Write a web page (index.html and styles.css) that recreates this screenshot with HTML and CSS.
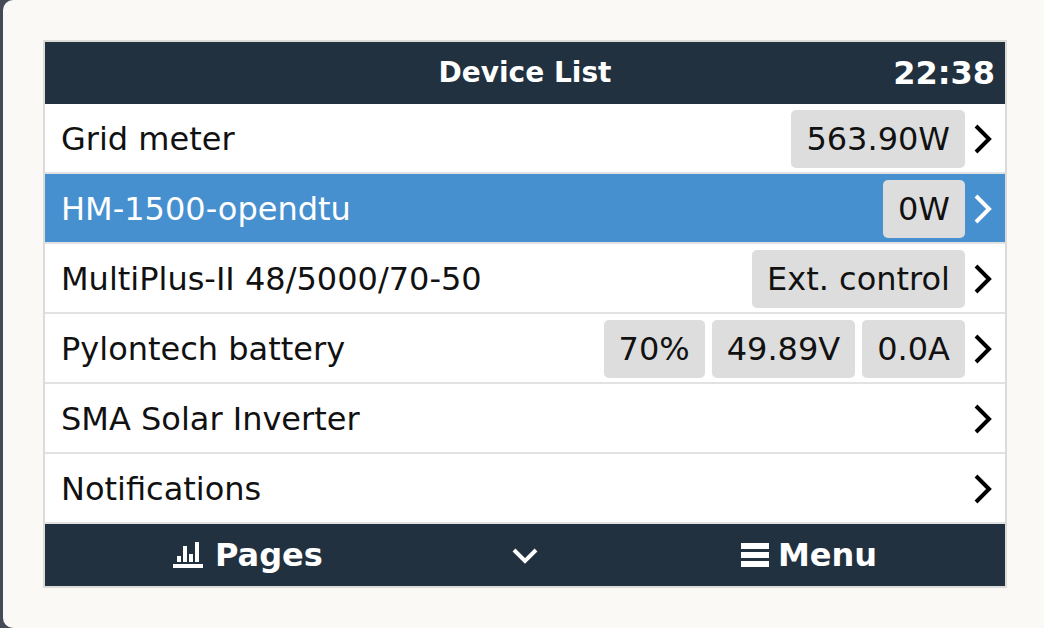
FILE: index.html
```html
<!DOCTYPE html>
<html lang="en">
<head>
<meta charset="utf-8">
<meta name="viewport" content="width=device-width, initial-scale=1">
<title>Device List</title>
<link rel="stylesheet" href="styles.css">
</head>
<body>
<main class="panel">
  <section class="screen">
    <header class="bar">
      <h1 class="title">Device List</h1>
      <time class="clock">22:38</time>
    </header>
    <ul class="list">
      <li><a class="row" href="#grid"><span class="name">Grid meter</span><span class="badge">563.90W</span><svg class="arrow" viewBox="0 0 18 30"><path d="M2 2 15 15 2 28"/></svg></a></li>
      <li><a class="row selected" href="#hm"><span class="name">HM-1500-opendtu</span><span class="badge">0W</span><svg class="arrow" viewBox="0 0 18 30"><path d="M2 2 15 15 2 28"/></svg></a></li>
      <li><a class="row" href="#multiplus"><span class="name">MultiPlus-II 48/5000/70-50</span><span class="badge">Ext. control</span><svg class="arrow" viewBox="0 0 18 30"><path d="M2 2 15 15 2 28"/></svg></a></li>
      <li><a class="row" href="#battery"><span class="name">Pylontech battery</span><span class="badge">70%</span><span class="badge">49.89V</span><span class="badge">0.0A</span><svg class="arrow" viewBox="0 0 18 30"><path d="M2 2 15 15 2 28"/></svg></a></li>
      <li><a class="row" href="#solar"><span class="name">SMA Solar Inverter</span><svg class="arrow" viewBox="0 0 18 30"><path d="M2 2 15 15 2 28"/></svg></a></li>
      <li><a class="row" href="#notifications"><span class="name">Notifications</span><svg class="arrow" viewBox="0 0 18 30"><path d="M2 2 15 15 2 28"/></svg></a></li>
    </ul>
    <footer class="bar actions">
      <button class="action pages" type="button"><svg class="icon-pages" viewBox="0 0 30 28"><path d="M4 15h4v6H4zM10 5h4v16h-4zM16 13h4v8h-4zM22 1h4v20h-4zM0 23h30v4H0z"/></svg>Pages</button>
      <button class="action" type="button" aria-label="Scroll down"><svg class="icon-down" viewBox="0 0 26 18"><path d="M2 4 13 15 24 4"/></svg></button>
      <button class="action menu" type="button"><svg class="icon-menu" viewBox="0 0 28 26"><path d="M0 1h28v6H0zM0 10h28v6H0zM0 19h28v6H0z"/></svg>Menu</button>
    </footer>
  </section>
</main>
</body>
</html>
```
FILE: styles.css
```css
* {
  box-sizing: border-box;
}

body {
  margin: 0;
  background: #454a56;
  font-family: "DejaVu Sans", sans-serif;
  font-size: 32px;
  line-height: 40px;
  color: #111;
}

.panel {
  min-height: 100vh;
  margin-left: 3px;
  padding: 40px 37px 40px 40px;
  border-radius: 10px 0 0 10px;
  background: #faf9f5;
}

.screen {
  border: 2px solid #dbdbd9;
  background: #fff;
}

.bar {
  display: grid;
  grid-template-columns: 1fr auto 1fr;
  align-items: center;
  height: 62px;
  padding: 0 10px;
  background: #223140;
  color: #fff;
  font-weight: bold;
}

.title {
  grid-column: 2;
  margin: 0;
  font-size: 28px;
}

.clock {
  justify-self: end;
}

.list {
  margin: 0;
  padding: 0;
  list-style: none;
}

.row {
  display: flex;
  align-items: center;
  gap: 7px;
  height: 70px;
  padding: 2px 13px 0 16px;
  border-bottom: 2px solid #e2e2e2;
  color: #111;
  text-decoration: none;
}

.selected {
  background: #4790d0;
  color: #fff;
}

.name {
  margin-right: auto;
}

.badge {
  padding: 9px 15px;
  border-radius: 5px;
  background: #ddd;
  color: #111;
}

.arrow {
  width: 18px;
  height: 30px;
  margin-left: 2px;
  fill: none;
  stroke: currentColor;
  stroke-width: 4;
}

.row:not(.selected) .arrow {
  color: #000;
}

.actions {
  padding: 0 128px;
}

.action {
  display: flex;
  align-items: center;
  padding: 0;
  border: 0;
  background: none;
  color: inherit;
  font: inherit;
}

.pages {
  gap: 12px;
  justify-self: start;
}

.menu {
  gap: 9px;
  justify-self: end;
}

.icon-pages {
  width: 30px;
  height: 28px;
  fill: currentColor;
}

.icon-down {
  width: 26px;
  height: 18px;
  fill: none;
  stroke: currentColor;
  stroke-width: 4;
}

.icon-menu {
  width: 28px;
  height: 26px;
  fill: currentColor;
}
```
